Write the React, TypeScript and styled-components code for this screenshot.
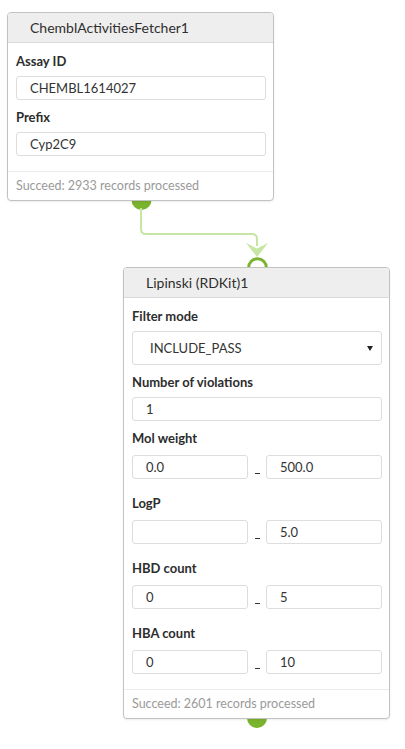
import React from "react";
import styled, { createGlobalStyle } from "styled-components";

const GlobalStyle = createGlobalStyle`
  html, body {
    margin: 0;
    padding: 0;
    background: #ffffff;
  }
  body {
    font-family: Lato, "Open Sans", "Liberation Sans", sans-serif;
    color: #333333;
  }
  * { box-sizing: border-box; }
`;

const Canvas = styled.div`
  position: relative;
  width: 405px;
  height: 749px;
  overflow: hidden;
  background: #ffffff;
`;

const Wires = styled.svg`
  position: absolute;
  left: 0;
  top: 0;
  z-index: 0;
  pointer-events: none;
`;

const Node = styled.div<{ $x: number; $y: number }>`
  position: absolute;
  left: ${(p) => p.$x}px;
  top: ${(p) => p.$y}px;
  z-index: 1;
  width: 267px;
  display: flex;
  flex-direction: column;
  background: #ffffff;
  border: 1px solid #c2c2c2;
  border-radius: 4px;
  box-shadow: 0 1px 2px rgba(0, 0, 0, 0.08);
`;

const Header = styled.div`
  height: 30px;
  padding-left: 22px;
  background: #eeeeee;
  border-bottom: 1px solid #dadada;
  border-radius: 3px 3px 0 0;
  font-size: 14px;
  line-height: 29px;
  color: #2f2f2f;
  white-space: nowrap;
`;

const Body = styled.div`
  display: flex;
  flex-direction: column;
  padding: 10px 7px 15px 8px;
`;

const Field = styled.div<{ $top: number; $gap: number }>`
  display: flex;
  flex-direction: column;
  gap: ${(p) => p.$gap}px;
  margin-top: ${(p) => p.$top}px;
`;

const Label = styled.div`
  font-size: 13px;
  font-weight: 700;
  line-height: 16px;
  color: #2d2d2d;
  white-space: nowrap;
`;

const Input = styled.div`
  height: 24px;
  padding-left: 13px;
  border: 1px solid #dddddd;
  border-radius: 3px;
  background: #ffffff;
  font-size: 13px;
  line-height: 22px;
  color: #333333;
  white-space: nowrap;
`;

const Select = styled.div`
  height: 34px;
  display: flex;
  align-items: center;
  justify-content: space-between;
  padding: 0 8px 0 17px;
  border: 1px solid #dddddd;
  border-radius: 3px;
  background: #ffffff;
  font-size: 13px;
  color: #333333;
`;

const Caret = styled.svg`
  display: block;
  flex: none;
`;

const RangeRow = styled.div`
  display: grid;
  grid-template-columns: 1fr 18px 1fr;
  align-items: end;
`;

const Dash = styled.span`
  justify-self: center;
  width: 5px;
  height: 1.5px;
  margin-bottom: 5px;
  background: #333333;
`;

const Footer = styled.div`
  height: 29px;
  padding-left: 8px;
  border-top: 1px solid #ececec;
  font-size: 12.5px;
  line-height: 28px;
  color: #9a9a9a;
  white-space: nowrap;
`;

const GREEN = "#7ab32e";
const LIGHT = "#c6e6a3";

type RangeProps = { label: string; from: string; to: string };

const RangeField: React.FC<RangeProps> = ({ label, from, to }) => (
  <Field $top={16} $gap={9}>
    <Label>{label}</Label>
    <RangeRow>
      <Input>{from}</Input>
      <Dash />
      <Input>{to}</Input>
    </RangeRow>
  </Field>
);

export default function App() {
  return (
    <>
      <GlobalStyle />
      <Canvas>
        <Wires width={405} height={749} viewBox="0 0 405 749">
          <circle cx={141.5} cy={200} r={10} fill={GREEN} />
          <path
            d="M141 208 V229 Q141 234 146 234 H252 Q257 234 257 239 V246"
            fill="none"
            stroke={LIGHT}
            strokeWidth={2}
          />
          <polygon points="246,243 257,248.5 268,243 257,257" fill={LIGHT} />
          <circle cx={257.5} cy={267.5} r={8.8} fill="#ffffff" stroke={GREEN} strokeWidth={3} />
          <circle cx={257} cy={718} r={10} fill={GREEN} />
        </Wires>

        <Node $x={7} $y={12}>
          <Header>ChemblActivitiesFetcher1</Header>
          <Body>
            <Field $top={0} $gap={7}>
              <Label>Assay ID</Label>
              <Input>CHEMBL1614027</Input>
            </Field>
            <Field $top={9} $gap={7}>
              <Label>Prefix</Label>
              <Input>Cyp2C9</Input>
            </Field>
          </Body>
          <Footer>Succeed: 2933 records processed</Footer>
        </Node>

        <Node $x={123} $y={267}>
          <Header>Lipinski (RDKit)1</Header>
          <Body>
            <Field $top={0} $gap={7}>
              <Label>Filter mode</Label>
              <Select>
                <span>INCLUDE_PASS</span>
                <Caret width={6} height={5} viewBox="0 0 6 5">
                  <polygon points="0,0 6,0 3,5" fill="#222222" />
                </Caret>
              </Select>
            </Field>
            <Field $top={9} $gap={7}>
              <Label>Number of violations</Label>
              <Input>1</Input>
            </Field>
            <Field $top={9} $gap={9}>
              <Label>Mol weight</Label>
              <RangeRow>
                <Input>0.0</Input>
                <Dash />
                <Input>500.0</Input>
              </RangeRow>
            </Field>
            <RangeField label="LogP" from="" to="5.0" />
            <RangeField label="HBD count" from="0" to="5" />
            <RangeField label="HBA count" from="0" to="10" />
          </Body>
          <Footer>Succeed: 2601 records processed</Footer>
        </Node>
      </Canvas>
    </>
  );
}
